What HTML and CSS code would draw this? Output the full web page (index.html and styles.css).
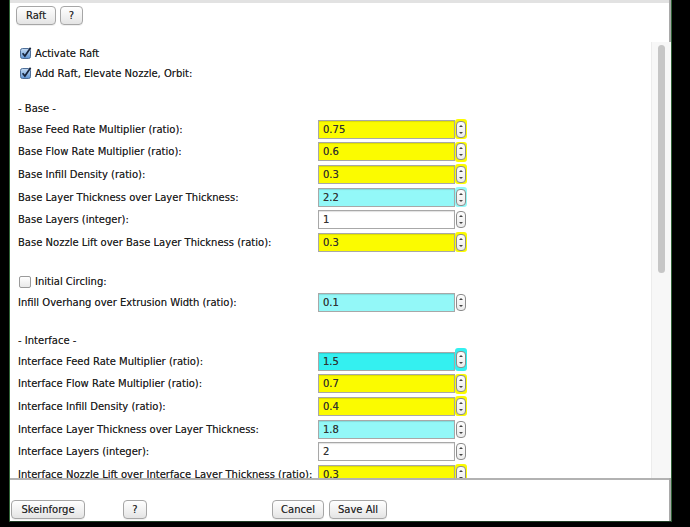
FILE: index.html
```html
<!DOCTYPE html>
<html>
<head>
<meta charset="utf-8">
<link rel="stylesheet" href="styles.css">
</head>
<body>
<div class="window">
  <div class="topline"></div>
  <div class="toolbar">
    <button class="btn raft">Raft</button>
    <button class="btn qtop">?</button>
  </div>
  <div class="scrollarea">
    <div class="content">
      <div class="cbrow first">
        <svg class="cb" width="12" height="12" viewBox="0 0 12 12"><defs><linearGradient id="g1" x1="0" y1="0" x2="0" y2="1"><stop offset="0" stop-color="#c6dcf4"/><stop offset="1" stop-color="#5f95d4"/></linearGradient></defs><rect x=".5" y="1.5" width="10" height="10" rx="2" fill="url(#g1)" stroke="#4f6f98"/><path d="M2.6 6.2 L4.9 9 L10.6 0.8" fill="none" stroke="#17253d" stroke-width="1.7"/></svg>
        <span>Activate Raft</span>
      </div>
      <div class="cbrow">
        <svg class="cb" width="12" height="12" viewBox="0 0 12 12"><defs><linearGradient id="g2" x1="0" y1="0" x2="0" y2="1"><stop offset="0" stop-color="#c6dcf4"/><stop offset="1" stop-color="#5f95d4"/></linearGradient></defs><rect x=".5" y="1.5" width="10" height="10" rx="2" fill="url(#g2)" stroke="#4f6f98"/><path d="M2.6 6.2 L4.9 9 L10.6 0.8" fill="none" stroke="#17253d" stroke-width="1.7"/></svg>
        <span>Add Raft, Elevate Nozzle, Orbit:</span>
      </div>

      <div class="section base">- Base -</div>
      <div class="row"><span class="label">Base Feed Rate Multiplier (ratio):</span><span class="field yellow">0.75</span><span class="spin yellow"><i class="cap"></i></span></div>
      <div class="row"><span class="label">Base Flow Rate Multiplier (ratio):</span><span class="field yellow">0.6</span><span class="spin yellow"><i class="cap"></i></span></div>
      <div class="row"><span class="label">Base Infill Density (ratio):</span><span class="field yellow">0.3</span><span class="spin yellow"><i class="cap"></i></span></div>
      <div class="row"><span class="label">Base Layer Thickness over Layer Thickness:</span><span class="field cyan">2.2</span><span class="spin cyan"><i class="cap"></i></span></div>
      <div class="row"><span class="label">Base Layers (integer):</span><span class="field white">1</span><span class="spin"><i class="cap"></i></span></div>
      <div class="row"><span class="label">Base Nozzle Lift over Base Layer Thickness (ratio):</span><span class="field yellow">0.3</span><span class="spin yellow"><i class="cap"></i></span></div>

      <div class="cbrow circ">
        <span class="cbempty"></span>
        <span>Initial Circling:</span>
      </div>
      <div class="row"><span class="label">Infill Overhang over Extrusion Width (ratio):</span><span class="field cyan">0.1</span><span class="spin"><i class="cap"></i></span></div>

      <div class="section iface">- Interface -</div>
      <div class="row"><span class="label">Interface Feed Rate Multiplier (ratio):</span><span class="field bcyan">1.5</span><span class="spin bcyan focus"><i class="cap"></i></span></div>
      <div class="row"><span class="label">Interface Flow Rate Multiplier (ratio):</span><span class="field yellow">0.7</span><span class="spin yellow"><i class="cap"></i></span></div>
      <div class="row"><span class="label">Interface Infill Density (ratio):</span><span class="field yellow">0.4</span><span class="spin yellow"><i class="cap"></i></span></div>
      <div class="row"><span class="label">Interface Layer Thickness over Layer Thickness:</span><span class="field cyan">1.8</span><span class="spin"><i class="cap"></i></span></div>
      <div class="row"><span class="label">Interface Layers (integer):</span><span class="field white">2</span><span class="spin"><i class="cap"></i></span></div>
      <div class="row"><span class="label">Interface Nozzle Lift over Interface Layer Thickness (ratio):</span><span class="field yellow">0.3</span><span class="spin yellow"><i class="cap"></i></span></div>
    </div>
    <div class="scrollbar"><div class="thumb"></div></div>
  </div>
  <div class="sep"></div>
  <div class="bottombar">
    <button class="btn skein">Skeinforge</button>
    <button class="btn qbot">?</button>
    <button class="btn cancel">Cancel</button>
    <button class="btn save">Save All</button>
  </div>
</div>
</body>
</html>
```

FILE: styles.css
```css
html, body {
  margin: 0;
  padding: 0;
  background: #000;
  width: 690px;
  height: 527px;
  overflow: hidden;
}

.window {
  margin-left: 9px;
  width: 663px;
  height: 522px;
  box-sizing: border-box;
  background: #fff;
  border-left: 1px solid #2f6236;
  border-right: 1px solid #2f6236;
  border-bottom: 1px solid #1f3d24;
  box-shadow: inset -2px 0 0 #a9a9a9;
  font-family: "DejaVu Sans", "Liberation Sans", sans-serif;
  font-size: 10px;
  color: #1f1f1f;
  text-shadow: 0 0 0.6px rgba(0, 0, 0, 0.55);
  display: flex;
  flex-direction: column;
}

.topline {
  height: 3px;
  background: #e2e2e2;
  margin-right: 2px;
}

.toolbar {
  height: 27px;
  display: flex;
  align-items: flex-start;
  padding: 3px 0 0 6px;
  box-sizing: border-box;
  gap: 4px;
}

.btn {
  font-family: "DejaVu Sans", "Liberation Sans", sans-serif;
  font-size: 10px;
  color: #2a2a2a;
  text-shadow: 0 0 0.6px rgba(0, 0, 0, 0.5);
  height: 19px;
  padding: 0;
  background: linear-gradient(#ffffff, #f1f1f1 55%, #e4e4e4);
  border: 1px solid #a6a6a6;
  border-radius: 4px;
  box-shadow: 0 1px 0 rgba(0, 0, 0, 0.06);
  line-height: 17px;
}

.raft { width: 40px; }
.qtop { width: 23px; }

.scrollarea {
  height: 448px;
  display: flex;
  overflow: hidden;
}

.content {
  flex: 1;
  padding: 13px 0 0 8px;
  overflow: hidden;
}

.cbrow {
  height: 20px;
  display: flex;
  align-items: center;
  padding-left: 2px;
}

.cbrow .cb {
  margin-right: 3px;
  flex: none;
}

.cbrow.circ {
  height: 18px;
  margin-top: 19.4px;
  padding-left: 1px;
}

.cbempty {
  width: 10px;
  height: 10px;
  border: 1px solid #9a9a9a;
  border-radius: 2px;
  background: linear-gradient(#ffffff, #e9e9e9);
  margin-right: 4px;
}

.section {
  height: 18px;
  line-height: 18px;
}

.section.base { margin-top: 17px; }
.section.iface { margin-top: 18.4px; }

.row {
  height: 22.6px;
  display: grid;
  grid-template-columns: 300px 137px 12px;
  align-items: center;
}

.label {
  white-space: nowrap;
  overflow: hidden;
}

.field {
  height: 19px;
  box-sizing: border-box;
  border: 1px solid #a8a8a8;
  box-shadow: inset 0 1px 1px rgba(0, 0, 0, 0.12);
  padding-left: 4px;
  line-height: 17px;
  color: #333;
}

.yellow { background: #fbfb00; }
.cyan { background: #93f8f8; }
.bcyan { background: #34f0f0; }
.white { background: #fff; }

.spin {
  height: 20px;
  border-radius: 3px;
  display: flex;
  align-items: center;
  justify-content: center;
}

.spin.focus {
  height: 23px;
  margin-top: -4px;
}

.cap {
  position: relative;
  display: block;
  width: 8px;
  height: 15px;
  border: 1px solid #8c8c8c;
  border-radius: 4px;
  background: linear-gradient(#fdfdfd, #ececec);
}

.cap::before,
.cap::after {
  content: "";
  position: absolute;
  left: 2px;
  border-left: 2px solid transparent;
  border-right: 2px solid transparent;
}

.cap::before {
  top: 3px;
  border-bottom: 2px solid #444;
}

.cap::after {
  bottom: 3px;
  border-top: 2px solid #444;
}

.scrollbar {
  width: 20px;
  margin-top: 12px;
  background: #f7f7f7;
  box-sizing: border-box;
  border-left: 1px solid #ececec;
  padding-left: 6px;
}

.thumb {
  margin-top: 3px;
  width: 7px;
  height: 228px;
  border-radius: 4px;
  background: #c6c6c6;
}

.sep {
  height: 2px;
  background: #b2b2b2;
  margin-right: 2px;
}

.bottombar {
  flex: 1;
  display: flex;
  align-items: flex-start;
  padding: 20px 0 0 1px;
}

.skein { width: 74px; }
.qbot { width: 24px; margin-left: 38px; }
.cancel { width: 52px; margin-left: 125px; }
.save { width: 58px; margin-left: 5px; }
```
